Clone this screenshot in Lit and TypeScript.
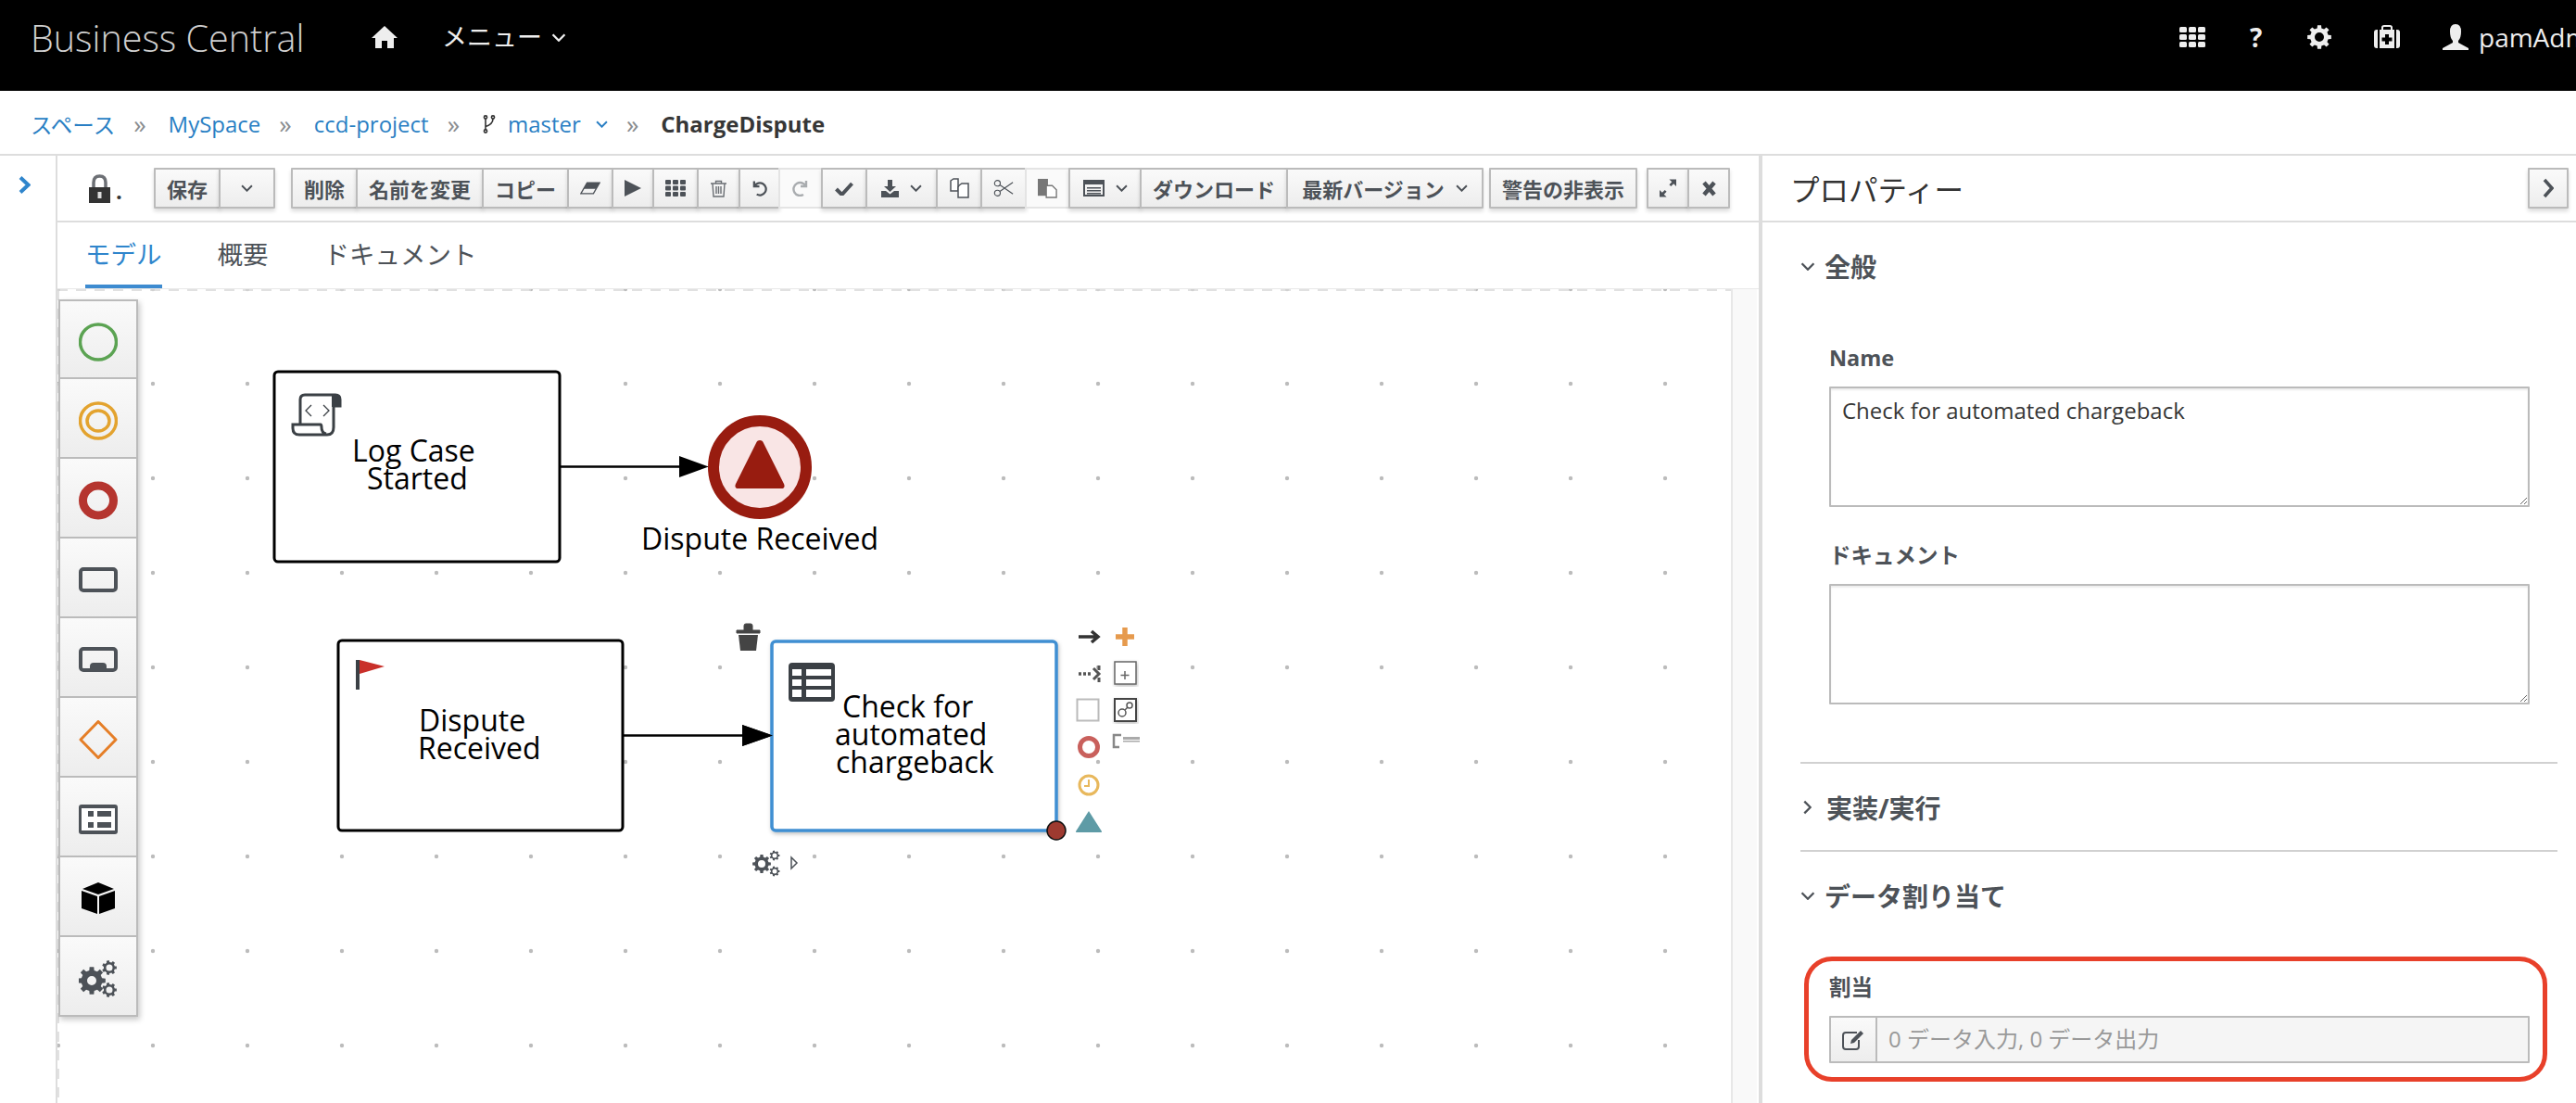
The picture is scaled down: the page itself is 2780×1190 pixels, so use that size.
import { LitElement, css, html, svg, type TemplateResult } from 'lit';
import { customElement } from 'lit/decorators.js';

// gear outline with a round hole, used in the header, the palette and the task marker
function gearPath(cx: number, cy: number, r: number, hole: number, teeth = 8): string {
  const pts: string[] = [];
  const step = (Math.PI * 2) / teeth;
  for (let i = 0; i < teeth; i++) {
    const a = i * step;
    const outer = r;
    const inner = r * 0.76;
    const w = step * 0.2;
    const p = (rad: number, ang: number) =>
      `${(cx + rad * Math.cos(ang)).toFixed(2)} ${(cy + rad * Math.sin(ang)).toFixed(2)}`;
    pts.push(p(inner, a - w * 1.5), p(outer, a - w), p(outer, a + w), p(inner, a + w * 1.5));
  }
  const c = `M${cx - hole} ${cy}a${hole} ${hole} 0 1 0 ${hole * 2} 0a${hole} ${hole} 0 1 0 ${-hole * 2} 0Z`;
  return `M${pts.join('L')}Z${c}`;
}

const chevronDown = (w = 12, h = 7) =>
  html`<svg class="chev" width=${w} height=${h} viewBox="0 0 12 7"><path d="M1 1l5 5 5-5" /></svg>`;

const ICONS: Record<string, TemplateResult> = {
  eraser: html`<svg width="26" height="16" viewBox="0 0 26 16">
    <path d="M9 1h16l-8 14H1z" fill="none" stroke="#4d5258" stroke-width="1.6" />
    <path d="M9 1h16l-4.5 8H4.5z" fill="#4d5258" />
  </svg>`,
  play: html`<svg width="18" height="18" viewBox="0 0 18 18"><path d="M0 0l18 9L0 18z" fill="#4d5258" /></svg>`,
  grid: html`<svg width="22" height="18" viewBox="0 0 22 18" fill="#4d5258">
    ${[0, 8, 16].map((x) => [0, 6.5, 13].map((y) => svg`<rect x=${x} y=${y} width="6" height="5" rx="1" />`))}
  </svg>`,
  trash: html`<svg width="19" height="19" viewBox="0 0 19 19" fill="none" stroke="#6a6e73" stroke-width="1.4">
    <path d="M1 4h17M6.500 4V1.500h6V4M3 4l1 14h11l1-14M7 7v8M9.500 7v8M12 7v8" />
  </svg>`,
  undo: html`<svg width="18" height="18" viewBox="0 0 18 18" fill="none" stroke="#4d5258" stroke-width="2.400">
    <path d="M3 1v6h6" /><path d="M3.500 6.500A7 7 0 1 1 6 16" />
  </svg>`,
  redo: html`<svg width="18" height="18" viewBox="0 0 18 18" fill="none" stroke="#a9acaf" stroke-width="2.400">
    <path d="M15 1v6H9" /><path d="M14.500 6.500A7 7 0 1 0 12 16" />
  </svg>`,
  check: html`<svg width="20" height="15" viewBox="0 0 20 15"><path d="M1.500 8l6 6L18.500 2" fill="none" stroke="#4d5258" stroke-width="4" /></svg>`,
  download: html`<svg width="19" height="19" viewBox="0 0 19 19" fill="#4d5258">
    <path d="M7 0h5v7h4l-6.500 6L3 7h4z" /><path d="M0 12h5l4.500 3.500L14 12h5v7H0z" />
  </svg>`,
  copy: html`<svg width="21" height="22" viewBox="0 0 21 22" fill="#fff" stroke="#4d5258" stroke-width="1.500">
    <path d="M1 3l3-2h5v13H1z" /><path d="M10 8l3-2h7v15h-11V10z" />
  </svg>`,
  cut: html`<svg width="25" height="22" viewBox="0 0 25 22" fill="none" stroke="#4d5258" stroke-width="1.300">
    <circle cx="5" cy="5" r="3.500" /><circle cx="5" cy="17" r="3.500" /><path d="M8 7l16 11M8 15L24 4" />
  </svg>`,
  paste: html`<svg width="23" height="22" viewBox="0 0 23 22">
    <path d="M0 0h12v20H0z" fill="#777" /><path d="M10 8h7l5 5v9H10z" fill="#fff" stroke="#777" stroke-width="1.500" />
  </svg>`,
  table: html`<svg width="23" height="18" viewBox="0 0 23 18">
    <rect x="1" y="1" width="21" height="16" fill="none" stroke="#4d5258" stroke-width="2" />
    <path d="M1 1h21v4H1zM4 8h15v1.500H4zM4 11h15v1.500H4zM4 14h15v1.500H4z" fill="#4d5258" />
  </svg>`,
  expand: html`<svg width="19" height="20" viewBox="0 0 19 20" fill="#4d5258">
    <path d="M11 0h8v8l-3-3-3 3-2-2 3-3zM0 12l3 3 3-3 2 2-3 3 3 3H0z" />
  </svg>`,
  close: html`<svg width="15" height="17" viewBox="0 0 15 17"><path d="M2 2l11 13M13 2L2 15" stroke="#4d5258" stroke-width="4.500" /></svg>`,
};

interface Btn {
  label?: string;
  icon?: string;
  caret?: boolean;
  width?: number;
  off?: boolean;
}

const GROUP_MAIN: Btn[] = [
  { label: '削除' },
  { label: '名前を変更' },
  { label: 'コピー' },
  { icon: 'eraser', width: 50 },
  { icon: 'play', width: 46 },
  { icon: 'grid', width: 50 },
  { icon: 'trash', width: 47 },
  { icon: 'undo', width: 45 },
  { icon: 'redo', width: 48, off: true },
  { icon: 'check', width: 50 },
  { icon: 'download', caret: true, width: 78 },
  { icon: 'copy', width: 50 },
  { icon: 'cut', width: 50 },
  { icon: 'paste', width: 49, off: true },
  { icon: 'table', caret: true, width: 79 },
  { label: 'ダウンロード', width: 160 },
  { label: '最新バージョン', caret: true, width: 213 },
];

const PALETTE: TemplateResult[] = [
  svg`<ellipse cx="21" cy="21" rx="19.500" ry="19" fill="none" stroke="#5ba352" stroke-width="3.500" />`,
  svg`<g fill="none" stroke="#e3a32f" stroke-width="3.500"><ellipse cx="21" cy="21" rx="19.500" ry="19" /><ellipse cx="21" cy="21" rx="12" ry="11" /></g>`,
  svg`<ellipse cx="21" cy="21" rx="16.500" ry="16" fill="none" stroke="#b5352f" stroke-width="9" />`,
  svg`<rect x="2" y="9" width="38" height="23" rx="3" fill="none" stroke="#4d5258" stroke-width="4" />`,
  svg`<rect x="2" y="9" width="38" height="23" rx="3" fill="none" stroke="#4d5258" stroke-width="4" /><path d="M12 32v-4q0-4 4-4h10q4 0 4 4v4z" fill="#4d5258" />`,
  svg`<path d="M21 1.500L40 21 21 40.500 2 21z" fill="none" stroke="#e57e27" stroke-width="3" stroke-linejoin="round" />`,
  svg`<rect x="0" y="5" width="42" height="32" rx="3" fill="#4d5258" /><path d="M3 9h36v24H3z" fill="#fff" /><path d="M10 12h6v6h-6zM20 12h15v6H20zM10 24h6v6h-6zM20 24h15v6H20z" fill="#4d5258" />`,
  svg`<path d="M21 3l17 7-17 6-17-6zM3 12l17 6v19L3 31zM39 12l-17 6v19l17-6z" fill="#000" />`,
  svg`<g fill="#4d5258" fill-rule="evenodd"><path d=${gearPath(14, 23, 15, 5)} /><path d=${gearPath(33, 9, 8, 3.500, 7)} /><path d=${gearPath(33, 33, 8, 3.500, 7)} /></g>`,
];

@customElement('app-root')
export class AppRoot extends LitElement {
  private renderBtn(b: Btn) {
    const style = b.width ? `width:${b.width}px` : '';
    return html`<button class="btn ${b.off ? 'off' : ''}" style=${style}>
      ${b.label ?? ''}${b.icon ? ICONS[b.icon] : ''}${b.caret ? chevronDown(13, 8) : ''}
    </button>`;
  }

  private renderHeader() {
    return html`<header class="masthead">
      <span class="brand">Business Central</span>
      <svg class="home" width="28" height="24" viewBox="0 0 28 24"><path d="M14 0l14 13h-4v11h-7v-8h-6v8H4V13H0z" /></svg>
      <span class="menu">メニュー ${chevronDown(16, 9)}</span>
      <div class="utils">
        <svg width="28" height="22" viewBox="0 0 28 22" fill="#eee">
          ${[0, 10, 20].map((x) => [0, 8, 16].map((y) => svg`<rect x=${x} y=${y} width="8" height="6" rx="1.500" />`))}
        </svg>
        <span class="help">?</span>
        <svg width="26" height="26" viewBox="0 0 26 26" fill="#eee" fill-rule="evenodd"><path d=${gearPath(13, 13, 13, 5)} /></svg>
        <svg width="28" height="26" viewBox="0 0 28 26">
          <path d="M9 6V2.500Q9 1 11 1h6q2 0 2 1.500V6" fill="none" stroke="#eee" stroke-width="2" />
          <rect x="6" y="5" width="16" height="20" fill="#eee" />
          <path d="M0 8q0-3 3-3h1v20H3q-3 0-3-3zM28 8q0-3-3-3h-1v20h1q3 0 3-3z" fill="#eee" />
          <path d="M12 10h4v3.500h3.500v4H16V21h-4v-3.500H8.500v-4H12z" fill="#000" />
        </svg>
        <span class="user">
          <svg width="28" height="28" viewBox="0 0 28 28" fill="#eee">
            <path d="M14 0q6 0 6 8 0 7-3 10v2l11 6v2H0v-2l11-6v-2Q8 15 8 8q0-8 6-8z" />
          </svg>
          pamAdmin
        </span>
      </div>
    </header>`;
  }

  private renderCrumbs() {
    return html`<nav class="crumbs">
      <a class="root">スペース</a><i>»</i><a>MySpace</a><i>»</i><a>ccd-project</a><i>»</i>
      <span class="branch">
        <svg width="15" height="20" viewBox="0 0 15 20" fill="none" stroke="#333" stroke-width="1.600">
          <circle cx="4" cy="2.500" r="1.600" /><circle cx="4" cy="17.500" r="1.600" /><circle cx="12" cy="2.500" r="1.600" />
          <path d="M4 4v12M12 4q0 6-8 8.500" />
        </svg>
        <a>master</a>${chevronDown(13, 8)}
      </span>
      <i>»</i><b>ChargeDispute</b>
    </nav>`;
  }

  private renderToolbar() {
    return html`<div class="toolbar">
      <svg class="lock" width="25" height="31" viewBox="0 0 25 31">
        <path d="M6 15V9q0-7 6.500-7T19 9v6" fill="none" stroke="#6d7075" stroke-width="3.500" />
        <rect x="1" y="14" width="23" height="17" fill="#333" />
        <rect x="10.500" y="19" width="4" height="7" fill="#ddd" />
      </svg>
      <span class="dot">.</span>
      <div class="group save">
        ${this.renderBtn({ label: '保存' })}${this.renderBtn({ caret: true, width: 61 })}
      </div>
      <div class="group">${GROUP_MAIN.map((b) => this.renderBtn(b))}</div>
      <div class="group warn">${this.renderBtn({ label: '警告の非表示' })}</div>
      <div class="group win">
        ${this.renderBtn({ icon: 'expand', width: 46 })}${this.renderBtn({ icon: 'close', width: 46 })}
      </div>
    </div>`;
  }

  private renderDiagram() {
    return html`<svg class="diagram" width="1806" height="878" viewBox="62 312 1806 878">
      <defs>
        <pattern id="dots" patternUnits="userSpaceOnUse" x="12" y="261" width="102" height="102">
          <circle cx="51" cy="51" r="2.200" fill="#bcbcbc" />
        </pattern>
        <filter id="soft" x="-10%" y="-10%" width="120%" height="120%">
          <feDropShadow dx="1" dy="2" stdDeviation="2" flood-color="#000" flood-opacity=".25" />
        </filter>
      </defs>
      <rect x="62" y="312" width="1806" height="878" fill="url(#dots)" />
      <path d="M62 313H1868M63 313V1190" stroke="#d8d8d8" stroke-width="1.500" stroke-dasharray="11 9" fill="none" />

      <path d="M605 503.500H735M672 793.500H803" stroke="#000" stroke-width="2.500" />
      <path d="M733 492l32 11.500-32 11.500zM801 782l33 11.500-33 11.500z" />

      <g class="task">
        <rect x="296" y="401" width="308" height="205" rx="4" />
        <rect x="365" y="691" width="307" height="205" rx="4" />
      </g>

      <g class="label">
        <text x="380" y="498">Log Case</text>
        <text x="396" y="528">Started</text>
        <text x="692" y="593">Dispute Received</text>
        <text x="452" y="788.500">Dispute</text>
        <text x="451" y="818.500">Received</text>
      </g>

      <!-- script marker -->
      <g fill="none" stroke="#3b4045" stroke-width="3">
        <path d="M324 458V431q0-5 5-5h33q5 0 5 5v7h-7v23q0 8-7 8H323q-7 0-7-7v-4h30q1 0 1 3 0 6 5 7" />
        <path d="M336 437l-6 6 6 6M349 437l6 6-6 6" stroke-width="1.300" />
      </g>
      <path d="M358 426h5q5 0 5 5v8h-10z" fill="#3b4045" />

      <!-- end event -->
      <ellipse cx="820" cy="504" rx="50" ry="50" fill="#f9e5e5" stroke="#981c10" stroke-width="12" />
      <path d="M820 475q3 0 4 3l22 44q2 5-3 5h-46q-5 0-3-5l22-44q1-3 4-3z" fill="#981c10" />

      <!-- flag -->
      <path d="M384 712h4v32h-4z" fill="#3b4045" />
      <path d="M388 712l27 7-27 8z" fill="#c9302a" />

      <!-- selected task -->
      <rect x="833" y="692" width="307" height="204" rx="4" fill="#fff" stroke="#3f8fd2" stroke-width="3.500" filter="url(#soft)" />
      <path d="M801 782l33 11.500-33 11.500z" />
      <g class="label">
        <text x="909" y="773.500">Check for</text>
        <text x="901" y="803.500">automated</text>
        <text x="902" y="833.500">chargeback</text>
      </g>
      <rect x="851" y="715" width="50" height="42" rx="4" fill="#3b4045" />
      <path d="M855 722h10v7h-10zM870 722h27v7h-27zM855 733h10v7h-10zM870 733h27v7h-27zM855 744h10v8h-10zM870 744h27v8h-27z" fill="#fff" />
      <circle cx="1140" cy="896" r="10" fill="#9e3a30" stroke="#111" stroke-width="1.500" />

      <!-- toolbox around the selected task -->
      <path d="M795 680h25v3h-25zM803 680v-5q0-2 2-2h5q2 0 2 2v5" fill="#444" stroke="#444" stroke-width="1" />
      <path d="M797 685h21l-2 17h-17z" fill="#444" />

      <path d="M1164 687h20M1178 681l7 6-7 6" fill="none" stroke="#333" stroke-width="3.500" />
      <path d="M1214 677v20M1204 687h20" stroke="#e69a4d" stroke-width="5.500" />
      <path d="M1164 727h14" stroke="#555" stroke-width="3.500" stroke-dasharray="3 2" fill="none" />
      <path d="M1180 721l6 6-6 6M1186 718v5M1186 731v5" fill="none" stroke="#555" stroke-width="3" />
      <rect x="1203" y="714" width="23" height="24" fill="#fff" stroke="#666" stroke-width="1.500" filter="url(#soft)" />
      <path d="M1214 724v9M1209.500 728.500h9" stroke="#666" stroke-width="1.500" />
      <rect x="1162.500" y="754.500" width="23" height="23" fill="#fff" stroke="#bbb" stroke-width="2" />
      <rect x="1203" y="754" width="23" height="24" fill="#fff" stroke="#444" stroke-width="2" filter="url(#soft)" />
      <g fill="none" stroke="#555" stroke-width="1.500"><circle cx="1211" cy="769" r="4" /><circle cx="1219" cy="761" r="3" /><path d="M1214 766l3-3" /></g>
      <path d="M1210 793h-8v13h6" fill="none" stroke="#888" stroke-width="2.500" />
      <path d="M1212 795h18v3h-18zM1212 799h18v1.500h-18z" fill="#aaa" />
      <circle cx="1175" cy="806" r="9.500" fill="#fff" stroke="#c9605c" stroke-width="5" />
      <circle cx="1175" cy="847" r="10" fill="#fff" stroke="#e8b85c" stroke-width="3" />
      <path d="M1175 841v7h-5" fill="none" stroke="#e8b85c" stroke-width="2" />
      <path d="M1175 875l14 22q.500 1-1 1h-26q-1.500 0-1-1z" fill="#5e9ba6" />

      <g fill="#4d5258" fill-rule="evenodd">
        <path d=${gearPath(822, 932, 10, 4)} />
        <path d=${gearPath(836, 923, 5.500, 2.500, 7)} />
        <path d=${gearPath(836, 940, 5.500, 2.500, 7)} />
      </g>
      <path d="M854 925l6 6-6 6z" fill="#fff" stroke="#4d5258" stroke-width="1.500" />
    </svg>`;
  }

  private renderProps() {
    return html`<section class="props">
      <div class="props-head">
        <h2>プロパティー</h2>
        <button class="btn fold">
          <svg width="12" height="22" viewBox="0 0 12 22"><path d="M2 2l8 9-8 9" fill="none" stroke="#4d5258" stroke-width="3.500" /></svg>
        </button>
      </div>
      <div class="props-body">
        <div class="acc-head first">${chevronDown(16, 9)}全般</div>
        <div class="form">
          <label>Name</label>
          <textarea>Check for automated chargeback</textarea>
          <label class="next">ドキュメント</label>
          <textarea></textarea>
        </div>
        <hr />
        <div class="acc-head">
          <svg class="chev side" width="9" height="16" viewBox="0 0 7 12"><path d="M1 1l5 5-5 5" /></svg>実装/実行
        </div>
        <hr />
        <div class="acc-head">${chevronDown(16, 9)}データ割り当て</div>
        <div class="form assign">
          <label>割当</label>
          <div class="input-group">
            <span class="addon">
              <svg width="24" height="22" viewBox="0 0 24 22" fill="none" stroke="#4d5258" stroke-width="2">
                <path d="M16 3H4Q1 3 1 6v12q0 3 3 3h11q3 0 3-3v-7" />
                <path d="M9 15l1-4L20 1l3 3-10 10z" fill="#4d5258" stroke="none" />
              </svg>
            </span>
            <span class="value">0 データ入力, 0 データ出力</span>
          </div>
        </div>
      </div>
    </section>`;
  }

  render() {
    return html`${this.renderHeader()}${this.renderCrumbs()}
      <div class="body">
        <aside class="rail">
          <svg width="13" height="19" viewBox="0 0 13 19"><path d="M2 1.500l8.500 8-8.500 8" fill="none" stroke="#2f85cc" stroke-width="4" /></svg>
        </aside>
        <main class="editor">
          ${this.renderToolbar()}
          <div class="tabs">
            <span class="tab active">モデル</span><span class="tab">概要</span><span class="tab">ドキュメント</span>
          </div>
          <div class="stage">
            <div class="canvas">
              ${this.renderDiagram()}
              <div class="palette">
                ${PALETTE.map((p) => html`<div class="cell"><svg width="42" height="42" viewBox="0 0 42 42">${p}</svg></div>`)}
              </div>
            </div>
            <div class="gutter"></div>
          </div>
        </main>
        ${this.renderProps()}
      </div>`;
  }

  static styles = css`
    :host {
      display: flex;
      flex-direction: column;
      height: 1190px;
      width: 2780px;
      overflow: hidden;
      background: #fff;
      color: #4d5258;
      font-family: 'Open Sans', 'Noto Sans CJK JP', sans-serif;
    }

    .masthead {
      flex: none;
      height: 98px;
      background: #000;
      color: #eee;
      display: flex;
      align-items: flex-start;
      padding: 0 0 0 33px;
      overflow: hidden;
    }
    .brand {
      font-size: 39.500px;
      font-weight: 300;
      color: #cfcfcf;
      line-height: 82px;
      width: 368px;
      flex: none;
      white-space: nowrap;
    }
    .home {
      flex: none;
      margin-top: 28px;
      fill: #eee;
    }
    .menu {
      flex: none;
      margin-left: 48px;
      font-size: 27px;
      line-height: 80px;
      display: flex;
      align-items: center;
      gap: 10px;
    }
    .menu .chev {
      stroke: #eee;
    }
    .utils {
      flex: none;
      margin-left: 1741px;
      height: 80px;
      display: flex;
      align-items: center;
      white-space: nowrap;
    }
    .help {
      font-size: 28px;
      font-weight: 700;
      width: 16px;
      margin: 0 46px 0 48px;
    }
    .utils > svg:nth-of-type(3) {
      margin-left: 46px;
    }
    .user {
      margin-left: 46px;
      display: flex;
      align-items: center;
      gap: 11px;
      font-size: 28px;
    }

    .chev {
      flex: none;
      fill: none;
      stroke: #4d5258;
      stroke-width: 1.8;
    }

    .crumbs {
      flex: none;
      height: 68px;
      box-sizing: border-box;
      height: 70px;
      padding: 3px 0 0 33px;
      border-bottom: 2px solid #ddd;
      display: flex;
      align-items: center;
      font-size: 24px;
    }
    .crumbs a {
      color: #2a7fc4;
    }
    .crumbs a.root {
      font-size: 23.500px;
    }
    .crumbs i {
      font-style: normal;
      color: #8a8d90;
      font-size: 27px;
      margin: 0 24px 0 20px;
    }
    .crumbs b {
      font-weight: 700;
      color: #363636;
    }
    .branch {
      display: flex;
      align-items: center;
      gap: 13px;
    }
    .branch .chev {
      margin-left: 3px;
      stroke: #2a7fc4;
    }

    .body {
      flex: 1;
      min-height: 0;
      display: flex;
    }
    .rail {
      flex: none;
      border-right: 2px solid #ddd;
      padding: 22px 0 0 20px;
      box-sizing: border-box;
      width: 62px;
    }
    .editor {
      flex: none;
      width: 1836px;
      display: flex;
      flex-direction: column;
    }

    .toolbar {
      flex: none;
      height: 70px;
      box-sizing: content-box;
      border-bottom: 2px solid #ddd;
      display: flex;
      align-items: center;
      padding-left: 33px;
    }
    .lock {
      flex: none;
    }
    .dot {
      font-size: 24px;
      font-weight: 700;
      width: 46px;
      padding-left: 5px;
      box-sizing: border-box;
      align-self: center;
      margin-top: 4px;
      color: #333;
    }
    .group {
      display: flex;
      flex: none;
      padding-left: 2px;
    }
    .group.save {
      margin-right: 17px;
    }
    .group.warn {
      margin-left: 6px;
    }
    .group.win {
      margin-left: 10px;
    }
    .btn {
      box-sizing: border-box;
      height: 44px;
      margin-left: -2px;
      padding: 0 12px;
      display: flex;
      align-items: center;
      justify-content: center;
      gap: 12px;
      border: 2px solid #bbb;
      border-radius: 1px;
      background: linear-gradient(#fafafa, #ededed);
      box-shadow: 0 3px 4px rgba(3, 3, 3, 0.14);
      color: #4d5258;
      font: 700 22px 'Open Sans', 'Noto Sans CJK JP', sans-serif;
      white-space: nowrap;
    }
    .btn.off {
      background: #fafafa;
      border-color: #e4e4e4 #bbb #e4e4e4 #e4e4e4;
      box-shadow: none;
    }

    .tabs {
      flex: none;
      height: 71px;
      display: flex;
      align-items: stretch;
      padding-left: 30px;
      gap: 60px;
      font-size: 27.500px;
      line-height: 70px;
    }
    .tab {
      box-sizing: border-box;
      border-bottom: 4px solid transparent;
      color: #4d5258;
    }
    .tab.active {
      color: #2f85cc;
      border-bottom-color: #3d8bd0;
    }

    .stage {
      flex: 1;
      min-height: 0;
      display: flex;
      border-top: 1px solid #e8e8e8;
    }
    .canvas {
      position: relative;
      flex: none;
      width: 1806px;
      overflow: hidden;
    }
    .diagram {
      display: block;
    }
    .task rect {
      fill: #fff;
      stroke: #000;
      stroke-width: 3;
    }
    .label text {
      font-size: 32px;
      fill: #000;
    }
    .gutter {
      flex: 1;
      border-left: 2px solid #e8e8e8;
      border-right: 2px solid #fff;
      background: #f9f9f9;
    }

    .palette {
      position: absolute;
      left: 1px;
      top: 11px;
      width: 86px;
      display: flex;
      flex-direction: column;
      box-shadow: 2px 3px 6px rgba(3, 3, 3, 0.22);
    }
    .cell {
      box-sizing: border-box;
      height: 86px;
      padding-top: 5px;
      display: flex;
      align-items: center;
      justify-content: center;
      border: 2px solid #bbb;
      border-top-width: 0;
      background: linear-gradient(#fafafa, #ededed);
    }
    .cell:first-child {
      border-top-width: 2px;
    }

    .props {
      flex: 1;
      min-width: 0;
      border-left: 4px solid #ddd;
    }
    .props-head {
      height: 70px;
      border-bottom: 2px solid #ddd;
      display: flex;
      align-items: center;
      justify-content: space-between;
      padding: 0 8px 0 30px;
    }
    .props-head h2 {
      margin: 0;
      font-size: 31.500px;
      font-weight: 400;
      color: #333;
    }
    .btn.fold {
      width: 44px;
      margin: 0;
      padding: 0;
    }
    .props-body {
      padding: 0 20px 0 41px;
    }
    .acc-head {
      height: 50px;
      margin: 22px 0 21px;
      display: flex;
      align-items: center;
      gap: 10px;
      font-size: 28px;
      font-weight: 700;
      color: #4d5258;
    }
    .acc-head .chev.side {
      margin: 0 6px 0 3px;
    }
    .acc-head.first {
      margin-bottom: 0;
    }
    .props-body hr {
      margin: 0;
      border: 0;
      height: 2px;
      background: #d1d1d1;
    }
    .form {
      position: relative;
      display: flex;
      flex-direction: column;
      padding: 0 30px 0 31px;
    }
    .acc-head.first + .form {
      padding-top: 59px;
      padding-bottom: 62px;
    }
    .form label {
      font-size: 23.500px;
      font-weight: 700;
      line-height: 30px;
      margin-bottom: 16px;
      color: #4d5258;
    }
    .form label.next {
      margin-top: 37px;
    }
    .form textarea {
      display: block;
      box-sizing: border-box;
      width: 100%;
      height: 130px;
      padding: 9px 12px;
      border: 2px solid #bbb;
      border-radius: 1px;
      outline: none;
      box-shadow: inset 0 2px 2px rgba(3, 3, 3, 0.08);
      font: 400 24px/30px 'Open Sans', 'Noto Sans CJK JP', sans-serif;
      color: #363636;
    }
    .form.assign {
      margin-top: 59px;
    }
    .form.assign::after {
      content: '';
      position: absolute;
      left: 4px;
      right: 11px;
      top: -18px;
      bottom: -20px;
      border: 5px solid #e8402a;
      border-radius: 30px;
      pointer-events: none;
    }
    .input-group {
      display: flex;
      height: 51px;
      box-sizing: border-box;
      border: 2px solid #bbb;
      border-radius: 1px;
    }
    .addon {
      flex: none;
      width: 50px;
      box-sizing: border-box;
      border-right: 2px solid #bbb;
      background: linear-gradient(#fafafa, #ededed);
      display: flex;
      align-items: center;
      justify-content: center;
    }
    .value {
      flex: 1;
      background: #f5f5f5;
      padding-left: 12px;
      font-size: 24px;
      line-height: 46px;
      color: #999;
    }
  `;
}

declare global {
  interface HTMLElementTagNameMap {
    'app-root': AppRoot;
  }
}
